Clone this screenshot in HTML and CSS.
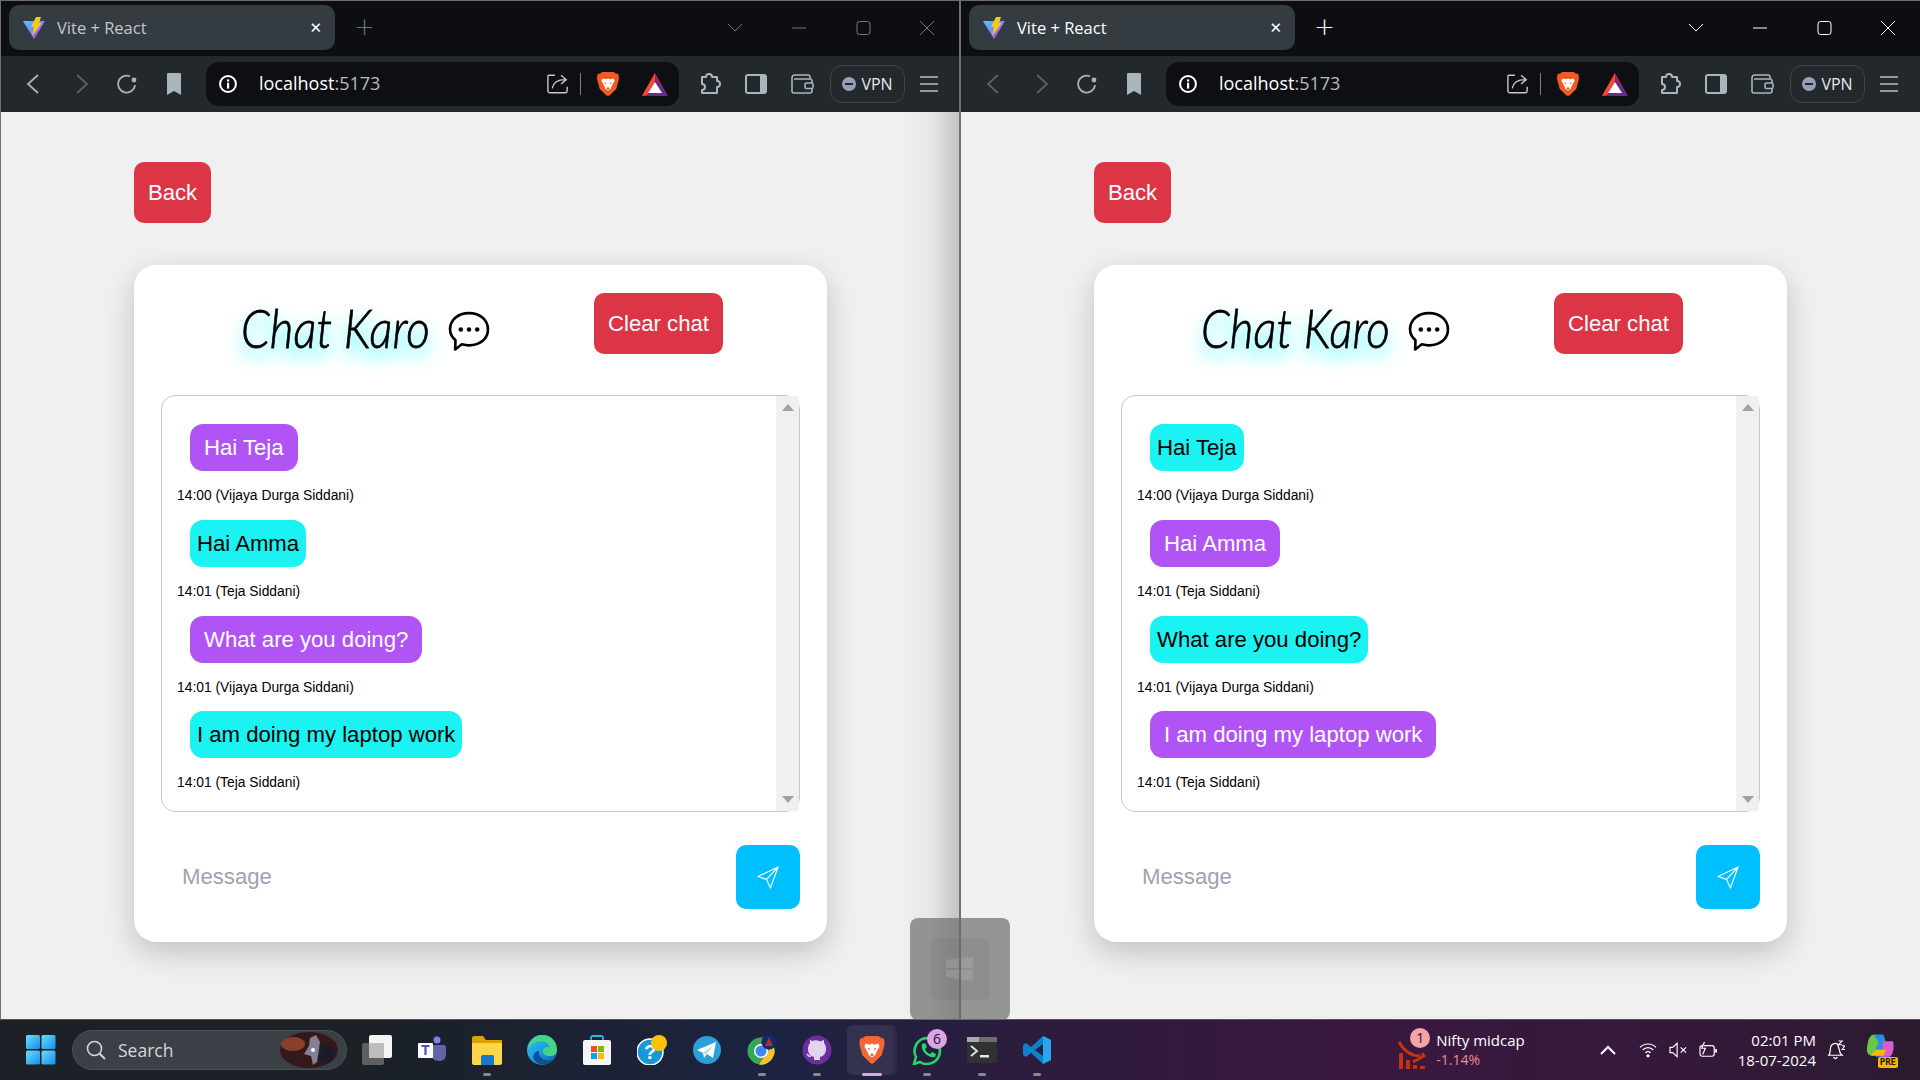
FILE: index.html
```html
<!DOCTYPE html>
<html lang="en">
<head>
    <meta charset="UTF-8">
    <meta name="viewport" content="width=device-width, initial-scale=1.0">
    <title>Chat Karo</title>
    <link rel="stylesheet" href="styles.css">
</head>
<body>
    <svg class="defs" width="0" height="0">
        <defs>
            <linearGradient id="viteBody" x1="0" y1="0" x2="1" y2="1">
                <stop offset="0" stop-color="#41d1ff"/>
                <stop offset="1" stop-color="#bd34fe"/>
            </linearGradient>
            <linearGradient id="winBlue" x1="0" y1="0" x2="1" y2="1">
                <stop offset="0" stop-color="#6fdcff"/>
                <stop offset="1" stop-color="#0f8fe8"/>
            </linearGradient>
            <linearGradient id="edgeGrad" x1="0" y1="0" x2="1" y2="1">
                <stop offset="0" stop-color="#35c1f1"/>
                <stop offset="0.5" stop-color="#1b9de2"/>
                <stop offset="1" stop-color="#0c59a4"/>
            </linearGradient>
            <symbol id="i-vite" viewBox="0 0 24 24">
                <path d="M1 5 L23 5 L12 23 Z" fill="url(#viteBody)"/>
                <path d="M14 1 L19 1 L17 7 L20 7 L10 20 L12 11 L9 11 Z" fill="#ffc517"/>
            </symbol>
            <symbol id="i-back" viewBox="0 0 24 24">
                <path d="M16 3 L6 12 L16 21" fill="none" stroke="currentColor" stroke-width="1.8"/>
            </symbol>
            <symbol id="i-forward" viewBox="0 0 24 24">
                <path d="M8 3 L18 12 L8 21" fill="none" stroke="currentColor" stroke-width="1.8"/>
            </symbol>
            <symbol id="i-reload" viewBox="0 0 24 24">
                <path d="M20 13 A8.5 8.5 0 1 1 15 4.3" fill="none" stroke="currentColor" stroke-width="1.8"/>
                <circle cx="19" cy="8" r="2.4" fill="currentColor"/>
            </symbol>
            <symbol id="i-bookmark" viewBox="0 0 24 24">
                <path d="M5 2 Q5 1 6 1 L18 1 Q19 1 19 2 L19 23 L12 19 L5 23 Z" fill="currentColor"/>
            </symbol>
            <symbol id="i-info" viewBox="0 0 24 24">
                <circle cx="12" cy="12" r="9.5" fill="none" stroke="currentColor" stroke-width="2.4"/>
                <rect x="10.8" y="10.5" width="2.6" height="7" fill="currentColor"/>
                <rect x="10.8" y="6.5" width="2.6" height="2.6" fill="currentColor"/>
            </symbol>
            <symbol id="i-share" viewBox="0 0 24 24">
                <path d="M9 3 L2 3 Q1 3 1 4 L1 21 Q1 23 3 23 L21 23 Q23 23 23 21 L23 16" fill="none" stroke="currentColor" stroke-width="1.6" transform="translate(0 -1)"/>
                <path d="M6 17 C7 11 12 7 21 7 M16 2 L22 7 L16 12" fill="none" stroke="currentColor" stroke-width="1.6"/>
            </symbol>
            <symbol id="i-brave" viewBox="0 0 24 28">
                <path d="M6 1 L18 1 L21 3 L23 3 L24 8 L21 19 L14 26 L12 27 L10 26 L3 19 L0 8 L1 3 L3 3 Z" fill="#f15a22"/>
                <path d="M6 8 L10 9 L12 8 L14 9 L18 8 L19 11 L16 16 L15 19 L12 21 L9 19 L8 16 L5 11 Z" fill="#fff"/>
                <path d="M8 12 L11 13 L9 14 Z M16 12 L13 13 L15 14 Z M10 19 L12 17 L14 19 L12 20 Z" fill="#f15a22"/>
            </symbol>
            <symbol id="i-bat" viewBox="0 0 26 23">
                <path d="M13 0 L26 23 L0 23 Z" fill="#662d91"/>
                <path d="M13 0 L13 8 L5 22 L0 23 Z" fill="#ff4724"/>
                <path d="M13 0 L20 13 L13 8 Z" fill="#9e1f63"/>
                <path d="M13 9 L20 20 L6 20 Z" fill="#fff"/>
            </symbol>
            <symbol id="i-puzzle" viewBox="0 0 24 24">
                <path d="M4 5 L8 5 C8 1 14 1 14 5 L19 5 L19 9 C23 9 23 15 19 15 L19 21 L4 21 L4 18 C8 18 8 12 4 12 Z" fill="none" stroke="currentColor" stroke-width="2" stroke-linejoin="round"/>
            </symbol>
            <symbol id="i-sidebar" viewBox="0 0 24 24">
                <rect x="2" y="3" width="20" height="18" rx="2" fill="none" stroke="currentColor" stroke-width="2"/>
                <rect x="16" y="3" width="6" height="18" fill="currentColor"/>
            </symbol>
            <symbol id="i-wallet" viewBox="0 0 24 24">
                <path d="M20 7 L20 5 Q20 3 18 3 L5 3 Q2 3 2 6 L2 19 Q2 21 4 21 L20 21 Q22 21 22 19 L22 9 Q22 7 20 7 L4 7" fill="none" stroke="currentColor" stroke-width="1.6"/>
                <rect x="15" y="11" width="8" height="5.5" rx="1.5" fill="#22282c" stroke="currentColor" stroke-width="1.6"/>
            </symbol>
            <symbol id="i-menu" viewBox="0 0 18 16">
                <path d="M0 1 H18 M0 8 H18 M0 15 H18" stroke="currentColor" stroke-width="1.4"/>
            </symbol>
            <symbol id="i-chat" viewBox="0 0 40 40">
                <path d="M20 2 C31 2 38.5 9 38.5 18 C38.5 27 31 33.5 20 33.5 C17.5 33.5 15 33 13 32.5 L6.5 37.5 L6.8 28.5 C3.5 25.5 1.5 22 1.5 18 C1.5 9 9 2 20 2 Z" fill="none" stroke="#000" stroke-width="2.6" stroke-linejoin="round"/>
                <circle cx="12" cy="18" r="2.2"/>
                <circle cx="20" cy="18" r="2.2"/>
                <circle cx="28" cy="18" r="2.2"/>
            </symbol>
            <symbol id="i-send" viewBox="0 0 24 24">
                <path d="M22 1 L1 11 L10 14 L14 23 Z M22 1 L10 14" fill="none" stroke="#fff" stroke-width="1.2" stroke-linejoin="round"/>
            </symbol>
        </defs>
    </svg>

    <div class="windows">
        <section class="window inactive">
            <header class="titlebar">
                <div class="tab">
                    <svg class="tab-icon"><use href="#i-vite"/></svg>
                    <span class="tab-title">Vite + React</span>
                    <span class="tab-close">&#10005;</span>
                </div>
                <span class="new-tab">+</span>
                <div class="win-controls">
                    <svg class="win-btn chevron" viewBox="0 0 16 16"><path d="M1 4 L8 11 L15 4" fill="none" stroke="currentColor"/></svg>
                    <svg class="win-btn" viewBox="0 0 16 16"><path d="M1 8 H15" stroke="currentColor"/></svg>
                    <svg class="win-btn" viewBox="0 0 16 16"><rect x="2" y="1.5" width="13" height="13" rx="2.5" fill="none" stroke="currentColor"/></svg>
                    <svg class="win-btn" viewBox="0 0 16 16"><path d="M1 1 L15 15 M15 1 L1 15" stroke="currentColor"/></svg>
                </div>
            </header>
            <nav class="toolbar">
                <svg class="tool-icon nav-on"><use href="#i-back"/></svg>
                <svg class="tool-icon nav-off"><use href="#i-forward"/></svg>
                <svg class="tool-icon nav-on"><use href="#i-reload"/></svg>
                <svg class="tool-icon nav-on"><use href="#i-bookmark"/></svg>
                <div class="addressbar">
                    <svg class="info-icon"><use href="#i-info"/></svg>
                    <span class="url">localhost<span class="url-port">:5173</span></span>
                    <svg class="share-icon"><use href="#i-share"/></svg>
                    <span class="addr-sep"></span>
                    <svg class="brave-icon"><use href="#i-brave"/></svg>
                    <svg class="bat-icon"><use href="#i-bat"/></svg>
                </div>
                <svg class="ext-icon"><use href="#i-puzzle"/></svg>
                <svg class="ext-icon"><use href="#i-sidebar"/></svg>
                <svg class="ext-icon"><use href="#i-wallet"/></svg>
                <div class="vpn"><span class="vpn-dot"></span>VPN</div>
                <svg class="menu-icon"><use href="#i-menu"/></svg>
            </nav>
            <main class="page">
                <button class="btn-red btn-back">Back</button>
                <div class="card">
                    <div class="card-head">
                        <h1 class="brand">Chat Karo</h1>
                        <svg class="brand-icon"><use href="#i-chat"/></svg>
                        <button class="btn-red btn-clear">Clear chat</button>
                    </div>
                    <div class="chat-box">
                        <div class="messages">
                            <div class="bubble mine">Hai Teja</div>
                            <div class="stamp">14:00 (Vijaya Durga Siddani)</div>
                            <div class="bubble other">Hai Amma</div>
                            <div class="stamp">14:01 (Teja Siddani)</div>
                            <div class="bubble mine">What are you doing?</div>
                            <div class="stamp">14:01 (Vijaya Durga Siddani)</div>
                            <div class="bubble other">I am doing my laptop work</div>
                            <div class="stamp">14:01 (Teja Siddani)</div>
                        </div>
                        <div class="scrollbar"><span class="arrow-up"></span><span class="arrow-down"></span></div>
                    </div>
                    <div class="composer">
                        <span class="placeholder">Message</span>
                        <button class="btn-send"><svg class="send-icon"><use href="#i-send"/></svg></button>
                    </div>
                </div>
            </main>
        </section>

        <section class="window">
            <header class="titlebar">
                <div class="tab">
                    <svg class="tab-icon"><use href="#i-vite"/></svg>
                    <span class="tab-title">Vite + React</span>
                    <span class="tab-close">&#10005;</span>
                </div>
                <span class="new-tab">+</span>
                <div class="win-controls">
                    <svg class="win-btn chevron" viewBox="0 0 16 16"><path d="M1 4 L8 11 L15 4" fill="none" stroke="currentColor"/></svg>
                    <svg class="win-btn" viewBox="0 0 16 16"><path d="M1 8 H15" stroke="currentColor"/></svg>
                    <svg class="win-btn" viewBox="0 0 16 16"><rect x="2" y="1.5" width="13" height="13" rx="2.5" fill="none" stroke="currentColor"/></svg>
                    <svg class="win-btn" viewBox="0 0 16 16"><path d="M1 1 L15 15 M15 1 L1 15" stroke="currentColor"/></svg>
                </div>
            </header>
            <nav class="toolbar">
                <svg class="tool-icon nav-off"><use href="#i-back"/></svg>
                <svg class="tool-icon nav-off"><use href="#i-forward"/></svg>
                <svg class="tool-icon nav-on"><use href="#i-reload"/></svg>
                <svg class="tool-icon nav-on"><use href="#i-bookmark"/></svg>
                <div class="addressbar">
                    <svg class="info-icon"><use href="#i-info"/></svg>
                    <span class="url">localhost<span class="url-port">:5173</span></span>
                    <svg class="share-icon"><use href="#i-share"/></svg>
                    <span class="addr-sep"></span>
                    <svg class="brave-icon"><use href="#i-brave"/></svg>
                    <svg class="bat-icon"><use href="#i-bat"/></svg>
                </div>
                <svg class="ext-icon"><use href="#i-puzzle"/></svg>
                <svg class="ext-icon"><use href="#i-sidebar"/></svg>
                <svg class="ext-icon"><use href="#i-wallet"/></svg>
                <div class="vpn"><span class="vpn-dot"></span>VPN</div>
                <svg class="menu-icon"><use href="#i-menu"/></svg>
            </nav>
            <main class="page">
                <button class="btn-red btn-back">Back</button>
                <div class="card">
                    <div class="card-head">
                        <h1 class="brand">Chat Karo</h1>
                        <svg class="brand-icon"><use href="#i-chat"/></svg>
                        <button class="btn-red btn-clear">Clear chat</button>
                    </div>
                    <div class="chat-box">
                        <div class="messages">
                            <div class="bubble other">Hai Teja</div>
                            <div class="stamp">14:00 (Vijaya Durga Siddani)</div>
                            <div class="bubble mine">Hai Amma</div>
                            <div class="stamp">14:01 (Teja Siddani)</div>
                            <div class="bubble other">What are you doing?</div>
                            <div class="stamp">14:01 (Vijaya Durga Siddani)</div>
                            <div class="bubble mine">I am doing my laptop work</div>
                            <div class="stamp">14:01 (Teja Siddani)</div>
                        </div>
                        <div class="scrollbar"><span class="arrow-up"></span><span class="arrow-down"></span></div>
                    </div>
                    <div class="composer">
                        <span class="placeholder">Message</span>
                        <button class="btn-send"><svg class="send-icon"><use href="#i-send"/></svg></button>
                    </div>
                </div>
            </main>
        </section>
    </div>

    <footer class="taskbar">
        <svg class="start" viewBox="0 0 30 30">
            <rect x="0" y="0" width="14" height="14" rx="1.5" fill="url(#winBlue)"/>
            <rect x="15.5" y="0" width="14" height="14" rx="1.5" fill="url(#winBlue)"/>
            <rect x="0" y="15.5" width="14" height="14" rx="1.5" fill="url(#winBlue)"/>
            <rect x="15.5" y="15.5" width="14" height="14" rx="1.5" fill="url(#winBlue)"/>
        </svg>
        <div class="search">
            <svg class="search-icon" viewBox="0 0 20 20"><circle cx="8.5" cy="8.5" r="7" fill="none" stroke="currentColor" stroke-width="1.6"/><path d="M13.5 13.5 L19 19" stroke="currentColor" stroke-width="1.8"/></svg>
            <span>Search</span>
            <svg class="search-art" viewBox="0 0 60 36">
                <ellipse cx="30" cy="18" rx="29" ry="18" fill="#34191c"/>
                <ellipse cx="14" cy="12" rx="12" ry="7" fill="#8a3f28"/>
                <ellipse cx="46" cy="22" rx="10" ry="9" fill="#1d1a2c"/>
                <circle cx="35" cy="19" r="7" fill="#23243e"/>
                <path d="M31 6 L37 3 L41 10 L38 30 L34 33 L32 24 L25 22 L30 14 Z" fill="#a9abc0" opacity=".7"/>
                <circle cx="34" cy="18" r="2" fill="#fff"/>
            </svg>
        </div>
        <div class="task-icons">
            <div class="slot">
                <svg class="app" viewBox="0 0 30 30"><rect x="0" y="8" width="22" height="22" rx="2" fill="#5f5f5f"/><rect x="7" y="0" width="23" height="23" rx="2" fill="#f4f4f4"/><rect x="7" y="8" width="15" height="15" fill="#bdbdbd"/></svg>
            </div>
            <div class="slot">
                <svg class="app" viewBox="0 0 30 30"><circle cx="20" cy="5" r="3.5" fill="#7b83eb"/><path d="M14 10 H27 Q29 10 29 12 V19 C29 24 26 26 22 26 C17 26 14 23 14 19 Z" fill="#6264a7"/><rect x="1" y="8" width="15" height="15" rx="1" fill="#fff"/><path d="M4.5 11 H12.5 M8.5 11 V20" stroke="#4b53bc" stroke-width="2.2"/></svg>
            </div>
            <div class="slot running">
                <svg class="app" viewBox="0 0 30 30"><path d="M0 3 Q0 1 2 1 H11 L14 5 H30 V12 H0 Z" fill="#dba204"/><path d="M0 8 H30 V28 Q30 30 28 30 H2 Q0 30 0 28 Z" fill="#ffd54a"/><path d="M9 22 Q9 20 11 20 H21 Q22 20 22 22 V30 H9 Z" fill="#1a78c8"/></svg>
            </div>
            <div class="slot">
                <svg class="app" viewBox="0 0 30 30"><circle cx="15" cy="15" r="15" fill="url(#edgeGrad)"/><path d="M15 0 C24 0 30 6 30 15 C30 19 27 21 23 21 C18 21 15 19 16 15 C18 11 22 12 23 13 C21 7 15 5 9 7 C3 10 2 14 1 14 C2 6 8 0 15 0 Z" fill="#47d28a"/><path d="M12 16 C11 22 17 27 25 25 C21 30 13 31 8 26 C5 22 6 17 12 16 Z" fill="#0b4f99"/></svg>
            </div>
            <div class="slot">
                <svg class="app" viewBox="0 0 30 30"><path d="M9 8 V3 Q9 1 11 1 H19 Q21 1 21 3 V8" fill="none" stroke="#29b6e8" stroke-width="1.8"/><rect x="1" y="5" width="28" height="25" rx="2" fill="#f5f5f5"/><rect x="9" y="11" width="6" height="6" fill="#f25022"/><rect x="16" y="11" width="6" height="6" fill="#7fba00"/><rect x="9" y="18" width="6" height="6" fill="#00a4ef"/><rect x="16" y="18" width="6" height="6" fill="#ffb900"/></svg>
            </div>
            <div class="slot">
                <svg class="app" viewBox="0 0 30 30"><circle cx="13" cy="17" r="13" fill="#1798d8" stroke="#fff" stroke-width="1.5"/><text x="13" y="24" class="help-mark">?</text><circle cx="22" cy="8" r="8" fill="#ffc107"/></svg>
            </div>
            <div class="slot">
                <svg class="app" viewBox="0 0 30 30"><circle cx="15" cy="15" r="14" fill="#2a9fd8"/><path d="M5 15 L24 7 L21 23 L15 19 L12 23 L11 18 Z" fill="#fff"/><path d="M11 18 L21 11 L14 19 Z" fill="#a9cfe6"/></svg>
            </div>
            <div class="slot running">
                <svg class="app" viewBox="0 0 30 30"><circle cx="14" cy="16" r="13.5" fill="#34a853"/><path d="M14 2.5 A13.5 13.5 0 0 1 26 10 H14 Z" fill="#ea4335"/><path d="M26 10 A13.5 13.5 0 0 1 12 29.5 L19 19 Z" fill="#fbc02d"/><circle cx="14" cy="16" r="7" fill="#fff"/><circle cx="14" cy="16" r="5.5" fill="#4285f4"/><circle cx="22" cy="7" r="7.5" fill="#0e2a6a"/><path d="M22 2 L26 11 H18 Z" fill="#a5322a"/></svg>
            </div>
            <div class="slot running">
                <svg class="app" viewBox="0 0 30 30"><circle cx="15" cy="15" r="14.5" fill="#6b2fa0"/><path d="M15 5 C9 5 6 9 6 14 C6 18 8 21 12 22 V25 H18 V22 C22 21 24 18 24 14 C24 11 23 9 22 8 V5 L18 6.5 C16.5 5 13.5 5 12 6.5 L8 5 V8" fill="#e3d4ee"/><path d="M9 21 Q7 22 5 19" fill="none" stroke="#e3d4ee" stroke-width="1.4"/></svg>
            </div>
            <div class="slot active">
                <svg class="app" viewBox="0 0 24 28"><use href="#i-brave"/></svg>
            </div>
            <div class="slot running">
                <svg class="app" viewBox="0 0 30 30"><path d="M15 3 A13 13 0 1 1 8 27 L2 29 L4 22 A13 13 0 0 1 15 3 Z" fill="none" stroke="#25d366" stroke-width="2.6"/><path d="M10 9 L13 8 L15 12 L13 14 C14 17 16 18 18 19 L20 17 L24 19 L23 22 C17 24 8 16 10 9 Z" fill="#25d366"/></svg>
                <span class="badge badge-wa">6</span>
            </div>
            <div class="slot running">
                <svg class="app" viewBox="0 0 30 30"><rect x="0" y="2" width="30" height="26" rx="2" fill="#2f3233"/><rect x="0" y="2" width="30" height="5" fill="#a9a9a9"/><rect x="12" y="2" width="18" height="5" fill="#6d6d6d"/><path d="M4 11 L10 16 L4 21" fill="none" stroke="#e6e6e6" stroke-width="1.8"/><rect x="13" y="20" width="9" height="2.5" fill="#e6e6e6"/></svg>
            </div>
            <div class="slot running">
                <svg class="app" viewBox="0 0 30 30"><path d="M21 1 L29 5 V25 L21 29 L9 18 L4 22 L1 20 V10 L4 8 L9 12 Z" fill="#0e7fcc"/><path d="M21 1 L29 5 V25 L21 29 Z" fill="#2aa4ee"/><path d="M21 9 L13 15 L21 21 Z" fill="#1d2538"/></svg>
            </div>
        </div>

        <div class="widget">
            <svg class="widget-icon" viewBox="0 0 28 30"><path d="M1 3 C6 12 13 17 22 17 M15 23 L26 17 L24 14" fill="none" stroke="#c2330f" stroke-width="3"/><path d="M1 14 H5 V30 H1 Z M8 21 H12 V30 H8 Z M15 26 H19 V30 H15 Z M22 27 H27 V30 H22 Z" fill="#c2330f"/></svg>
            <span class="badge badge-widget">1</span>
            <div class="widget-text">
                <span class="widget-name">Nifty midcap</span>
                <span class="widget-value">-1.14%</span>
            </div>
        </div>
        <div class="tray">
            <svg class="tray-icon" viewBox="0 0 18 12"><path d="M2 10 L9 3 L16 10" fill="none" stroke="#fff" stroke-width="2"/></svg>
            <svg class="tray-icon" viewBox="0 0 20 18"><path d="M1 6 C6 1 14 1 19 6 M4 9 C7.5 5.5 12.5 5.5 16 9 M7 12 C9 10.5 11 10.5 13 12" fill="none" stroke="#fff" stroke-width="1.4"/><circle cx="10" cy="15.5" r="1.8" fill="#fff"/></svg>
            <svg class="tray-icon" viewBox="0 0 20 18"><path d="M1 6 H4 L9 1.5 V16.5 L4 12 H1 Z" fill="none" stroke="#fff" stroke-width="1.3"/><path d="M13 6 L19 12 M19 6 L13 12" stroke="#fff" stroke-width="1.3"/></svg>
            <svg class="tray-icon" viewBox="0 0 20 18"><rect x="1" y="4" width="16" height="12" rx="2.5" fill="none" stroke="#fff" stroke-width="1.3"/><rect x="18" y="8" width="2" height="4" fill="#fff"/><path d="M6 0 L3 7 H7 L4 14" fill="#2f1830" stroke="#fff" stroke-width="1.3"/></svg>
        </div>
        <div class="clock">
            <span>02:01 PM</span>
            <span>18-07-2024</span>
        </div>
        <svg class="bell" viewBox="0 0 20 22"><path d="M3 16 C5 14 4 10 5 7 C6 4 9 3 12 4 L14 10 L15 14 L17 16 Z M8 18 Q10 21 12 18" fill="none" stroke="#fff" stroke-width="1.3"/><path d="M13 1 H17 L13 5 H17 M17 6 H20 L17 10 H20" fill="none" stroke="#fff" stroke-width="1.1"/></svg>
        <div class="copilot">
            <svg class="copilot-icon" viewBox="0 0 30 28"><path d="M8 2 H18 L24 20 Q25 25 20 25 H10 Z" fill="#2a8ee0"/><path d="M8 2 C3 3 2 9 1 16 Q0 24 7 24 L13 10 Z" fill="#6cc644"/><path d="M18 9 L28 9 Q30 20 25 25 H15 Z" fill="#d85fc9"/><path d="M5 24 H18 L21 18 H10 Z" fill="#ffb900"/></svg>
            <span class="pre-tag">PRE</span>
        </div>
    </footer>

    <div class="snap-hint">
        <div class="snap-inner">
            <svg class="snap-logo" viewBox="0 0 28 24"><path d="M0 3 L13 1 V11 H0 Z M15 1 L27 0 V11 H15 Z M0 13 H13 V22 L0 20 Z M15 13 H27 V24 L15 22 Z" fill="#fff" fill-opacity=".12"/></svg>
        </div>
    </div>
</body>
</html>
```

FILE: styles.css
```css
* {
    box-sizing: border-box;
}
html, body {
    margin: 0;
    height: 100%;
    overflow: hidden;
}
body {
    position: relative;
    width: 1920px;
    height: 1080px;
    font-family: "Liberation Sans", Arial, sans-serif;
    background: #1c2228;
}
.defs {
    position: absolute;
}

/* windows */
.windows {
    display: flex;
    height: 1020px;
}
.window {
    width: 960px;
    display: flex;
    flex-direction: column;
    border-left: 1px solid #707070;
    border-top: 1px solid #6d6d6d;
    border-bottom: 1px solid #555;
}
.window.inactive {
    border-right: 1px solid #707070;
}
.titlebar {
    height: 55px;
    background: #0d0e13;
    display: flex;
    align-items: flex-start;
    padding: 4px 0 0 8px;
    color: #fff;
    font-family: "Open Sans", "Noto Sans", sans-serif;
}
.tab {
    width: 326px;
    height: 45px;
    background: #343c41;
    border-radius: 10px;
    display: flex;
    align-items: center;
    padding: 0 13px 0 13px;
}
.tab-icon {
    width: 24px;
    height: 24px;
    margin-right: 11px;
}
.tab-title {
    font-size: 16.5px;
    flex: 1;
}
.tab-close {
    font-size: 15px;
    font-weight: bold;
    font-family: "DejaVu Sans", sans-serif;
}
.new-tab {
    font-family: "DejaVu Sans", sans-serif;
    font-size: 25px;
    font-weight: 200;
    line-height: 44px;
    margin-left: 19px;
    width: 20px;
}
.win-controls {
    margin-left: auto;
    display: flex;
    align-items: center;
    gap: 48px;
    height: 46px;
    padding-right: 24px;
}
.win-btn {
    width: 16px;
    height: 16px;
    color: #fff;
}
.inactive .tab-title {
    color: #c4c6c8;
}
.inactive .win-btn {
    color: #74777a;
}
.inactive .new-tab {
    color: #6c7074;
}

.toolbar {
    height: 56px;
    background: #22282c;
    display: flex;
    align-items: center;
    padding-left: 21px;
    color: #a9b4bb;
}
.tool-icon {
    width: 24px;
    height: 24px;
    margin-right: 22.5px;
}
.nav-on {
    color: #a9b4bb;
}
.nav-off {
    color: #5b6367;
}
.addressbar {
    width: 473px;
    height: 44px;
    margin-left: -2px;
    background: #0d0f13;
    border-radius: 13px;
    display: flex;
    align-items: center;
    padding-left: 12px;
    margin-right: 19px;
}
.info-icon {
    width: 20px;
    height: 20px;
    color: #fff;
}
.url {
    font-family: "Open Sans", "Noto Sans", sans-serif;
    font-size: 18px;
    color: #fff;
    margin-left: 21px;
    padding-bottom: 2px;
    flex: 1;
}
.url-port {
    color: #b5bcc1;
}
.share-icon {
    width: 21px;
    height: 22px;
    color: #c4c8cb;
}
.addr-sep {
    width: 1px;
    height: 22px;
    background: #7d8386;
    margin: 0 15px 0 12px;
}
.brave-icon {
    width: 24px;
    height: 26px;
}
.bat-icon {
    width: 26px;
    height: 23px;
    margin: 0 11px 0 22px;
}
.ext-icon {
    width: 24px;
    height: 24px;
    margin-right: 22px;
}
.vpn {
    width: 75px;
    height: 38px;
    margin-left: -6px;
    padding-bottom: 1px;
    border: 1px solid #3d4549;
    border-radius: 12px;
    display: flex;
    align-items: center;
    justify-content: center;
    gap: 5px;
    color: #e6e9eb;
    font-family: "Open Sans", "Noto Sans", sans-serif;
    font-size: 16px;
}
.vpn-dot {
    width: 14px;
    height: 14px;
    border-radius: 50%;
    background: #9a9db8;
    position: relative;
}
.vpn-dot::after {
    content: "";
    position: absolute;
    left: 3px;
    top: 6px;
    width: 8px;
    height: 2px;
    background: #22282c;
}
.menu-icon {
    width: 18px;
    height: 16px;
    margin-left: 15px;
    color: #b8c0c5;
}

/* page */
.page {
    flex: 1;
    background: #f0f0f0;
    padding: 50px 0 0 133px;
}
.inactive .page {
    background-image: linear-gradient(90deg, rgba(0, 0, 0, 0) calc(100% - 60px), rgba(0, 0, 0, .04) calc(100% - 28px), rgba(0, 0, 0, .19) 100%);
}
.btn-red {
    background: #dc3545;
    color: #fff;
    border: 0;
    border-radius: 10px;
    font-family: "Liberation Sans", Arial, sans-serif;
    font-size: 22.15px;
    height: 61px;
    display: block;
}
.btn-back {
    width: 77px;
    padding: 0;
}
.card {
    width: 693px;
    height: 677px;
    margin-top: 42px;
    background: #fff;
    border-radius: 22px;
    box-shadow: 0 10px 30px rgba(0, 0, 0, .2);
    padding: 28px 27px 0;
}
.card-head {
    display: flex;
    align-items: flex-start;
    height: 102px;
}
.brand {
    margin: 3px 0 0 80px;
    width: 188px;
    font-family: "Lato", "Open Sans", sans-serif;
    font-style: italic;
    font-weight: 300;
    font-size: 54px;
    line-height: 64px;
    white-space: nowrap;
    color: #000;
    -webkit-text-stroke: .8px #000;
    transform: scaleX(.85);
    transform-origin: left center;
    text-shadow: 0 9px 16px #3ff4ff, 0 9px 22px #8ff9ff;
}
.brand-icon {
    width: 42px;
    height: 41px;
    margin: 18px 0 0 19px;
}
.btn-clear {
    width: 129px;
    margin-left: auto;
    margin-right: 77px;
    padding: 0;
}
.chat-box {
    width: 639px;
    height: 417px;
    border: 1px solid #c8c8c8;
    border-radius: 14px;
    display: flex;
}
.messages {
    flex: 1;
    padding: 28px 0 0 15px;
}
.bubble {
    display: table;
    height: 47px;
    line-height: 47px;
    margin-left: 13px;
    border-radius: 13px;
    font-size: 22.15px;
}
.bubble.mine {
    background: #b154f5;
    color: #fff;
    padding: 0 14px;
}
.bubble.other {
    background: #1bf2f2;
    color: #000;
    padding: 0 7px;
}
.stamp {
    font-size: 13.85px;
    line-height: 16px;
    color: #000;
    margin: 16px 0 16.8px;
}
.scrollbar {
    width: 23px;
    background: #f0f0f0;
    display: flex;
    flex-direction: column;
    justify-content: space-between;
    align-items: center;
    padding: 8px 0 8px;
}
.arrow-up {
    border: 6px solid transparent;
    border-top: 0;
    border-bottom: 7px solid #a3a3a3;
}
.arrow-down {
    border: 6px solid transparent;
    border-bottom: 0;
    border-top: 7px solid #a3a3a3;
}
.composer {
    display: flex;
    align-items: center;
    justify-content: space-between;
    margin-top: 33px;
    padding-left: 21px;
}
.placeholder {
    font-size: 22.15px;
    color: #9ca3af;
}
.btn-send {
    width: 64px;
    height: 64px;
    background: #00bfff;
    border: 0;
    border-radius: 10px;
    display: flex;
    align-items: center;
    justify-content: center;
    padding: 0;
}
.send-icon {
    width: 23px;
    height: 23px;
}

/* taskbar */
.taskbar {
    height: 60px;
    display: flex;
    align-items: center;
    padding-left: 26px;
    color: #fff;
    font-family: "Open Sans", "Noto Sans", sans-serif;
    background: linear-gradient(90deg, #1b2127 0%, #1b2127 20%, #1c2340 40%, #2e1b3e 55%, #3a1840 70%, #36193c 85%, #2c1a30 100%);
}
.start {
    width: 30px;
    height: 30px;
}
.search {
    width: 275px;
    height: 40px;
    margin-left: 16px;
    border-radius: 20px;
    background: #3a4045;
    border: 1px solid #4a5055;
    display: flex;
    align-items: center;
    padding-left: 13px;
    font-size: 17.5px;
    color: #d5d7d9;
}
.search-icon {
    width: 20px;
    height: 20px;
    margin-right: 12px;
}
.search-art {
    width: 60px;
    height: 36px;
    margin-left: auto;
    margin-right: 7px;
}
.task-icons {
    display: flex;
    margin-left: 2px;
}
.slot {
    width: 55px;
    height: 60px;
    display: flex;
    align-items: center;
    justify-content: center;
    position: relative;
}
.app {
    width: 30px;
    height: 30px;
}
.slot.running::after,
.slot.active::after {
    content: "";
    position: absolute;
    bottom: 4px;
    left: 50%;
    width: 8px;
    height: 3px;
    margin-left: -4px;
    border-radius: 2px;
    background: #8a8a90;
}
.slot.active::before {
    content: "";
    position: absolute;
    left: 3px;
    top: 5px;
    width: 47px;
    height: 50px;
    border-radius: 6px;
    background: rgba(255, 255, 255, .08);
    box-shadow: 3px 0 0 rgba(255, 255, 255, .04);
}
.slot.active::after {
    width: 20px;
    margin-left: -10px;
    background: #dba6e6;
}
.help-mark {
    font-family: "Liberation Sans", Arial, sans-serif;
    font-size: 20px;
    font-weight: bold;
    fill: #fff;
    text-anchor: middle;
}
.badge {
    position: absolute;
    width: 20px;
    height: 20px;
    border-radius: 50%;
    color: #1a1a1a;
    font-size: 14px;
    line-height: 20px;
    text-align: center;
}
.badge-wa {
    background: #d9a5e4;
    right: 7px;
    top: 9px;
}
.widget {
    display: flex;
    align-items: center;
    position: relative;
    margin-left: auto;
    margin-right: 74px;
}
.widget-icon {
    width: 28px;
    height: 30px;
    margin-right: 10px;
    margin-top: 8px;
}
.badge-widget {
    background: #f5a3a8;
    left: 12px;
    top: -2px;
}
.widget-text {
    display: flex;
    flex-direction: column;
    line-height: 20px;
}
.widget-name {
    font-size: 15px;
}
.widget-value {
    font-size: 14px;
    color: #f08a94;
}
.tray {
    display: flex;
    align-items: center;
    gap: 12px;
    margin-right: 21px;
}
.tray-icon {
    width: 18px;
    height: 16px;
}
.tray-icon:first-child {
    margin-right: 10px;
}
.clock {
    display: flex;
    flex-direction: column;
    align-items: flex-end;
    font-size: 15px;
    line-height: 20px;
}
.bell {
    width: 19px;
    height: 21px;
    margin-left: 10px;
}
.copilot {
    position: relative;
    width: 30px;
    height: 36px;
    margin: 0 24px 0 21px;
}
.copilot-icon {
    width: 29px;
    height: 28px;
}
.pre-tag {
    position: absolute;
    right: -2px;
    bottom: 0;
    background: #f5b800;
    color: #1c1c1c;
    border-radius: 2px;
    font-family: "DejaVu Sans Mono", monospace;
    font-size: 9px;
    font-weight: bold;
    line-height: 11px;
    padding: 0 2px;
}

/* snap hint over both windows */
.snap-hint {
    position: absolute;
    left: 910px;
    top: 918px;
    width: 100px;
    height: 102px;
    border-radius: 8px;
    background: rgba(110, 110, 110, .7);
    display: flex;
    align-items: center;
    justify-content: center;
}
.snap-inner {
    width: 60px;
    height: 62px;
    border-radius: 6px;
    background: rgba(90, 90, 90, .1);
    display: flex;
    align-items: center;
    justify-content: center;
}
.snap-logo {
    width: 28px;
    height: 24px;
}
```
